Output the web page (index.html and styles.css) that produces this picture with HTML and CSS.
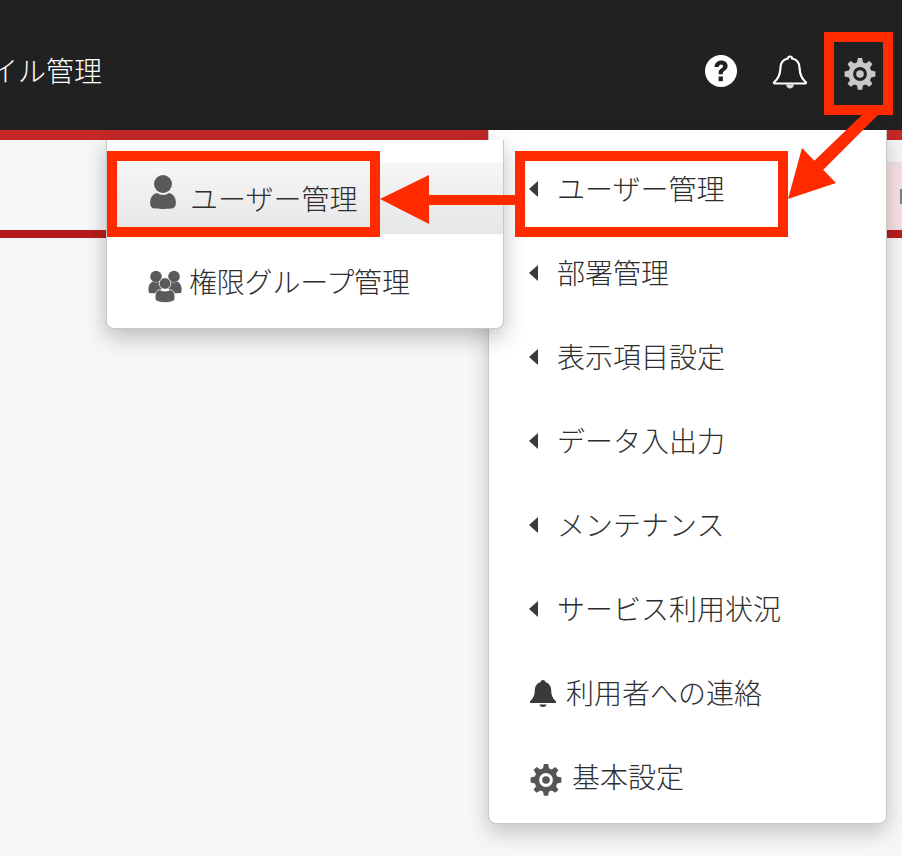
FILE: index.html
```html
<!DOCTYPE html>
<html lang="ja">
<head>
<meta charset="utf-8">
<title>ファイル管理</title>
<link rel="stylesheet" href="styles.css">
</head>
<body>
<svg width="0" height="0" class="defs">
  <defs>
    <path id="gear" fill-rule="evenodd" d="M14 1h4l.8 4 2.600 1.100 3.400-2.300 2.900 2.900-2.300 3.400 1.100 2.700 4 .8v4.800l-4 .8-1.100 2.600 2.300 3.400-2.900 2.900-3.400-2.300-2.600 1.100-.8 4h-4l-.8-4-2.600-1.100-3.400 2.300-2.900-2.900 2.300-3.400-1.100-2.600-4-.8v-4.800l4-.8 1.100-2.700-2.300-3.400 2.900-2.900 3.400 2.300L13.200 5zM16 9.500a6.500 6.500 0 1 0 0 13 6.500 6.500 0 0 0 0-13z"/>
    <circle id="gear-hub" cx="16" cy="16" r="3.600"/>
  </defs>
</svg>
<header class="topbar">
  <div class="title">ファイル管理</div>
  <div class="actions">
    <svg class="icon-help" viewBox="0 0 32 32"><circle cx="16" cy="16" r="16" fill="#fff"/><path d="M9.500 12c.2-4 3-6.500 6.800-6.500 3.800 0 6.300 2.300 6.300 5.500 0 4.300-4.700 4.600-4.700 7.200v1h-4.300v-1.500c0-4 4.500-4.300 4.500-6.400 0-1.100-.8-1.900-2-1.900-1.300 0-2.200 1-2.300 2.500z" fill="#212121"/><rect x="13.600" y="21.500" width="4.300" height="4.700" fill="#212121"/></svg>
    <svg class="icon-bell" viewBox="0 0 36 36"><path d="M18 2.500c1.300 0 2 .8 2.100 2 4.800 1 7.400 4.600 7.500 9.700.2 6.700 1.700 10 6.100 13.800.7.700.3 1.500-.6 1.500H2.900c-.9 0-1.300-.8-.6-1.500 4.400-3.800 5.900-7.100 6.100-13.800.1-5.100 2.700-8.700 7.500-9.700.1-1.200.8-2 2.100-2z" fill="none" stroke="#fff" stroke-width="2.200"/><path d="M14 30.500c.4 2.700 2 4 4 4s3.600-1.300 4-4z" fill="#ddd"/></svg>
    <svg class="icon-gear-top" viewBox="0 0 32 32"><use href="#gear"/><use href="#gear-hub"/></svg>
  </div>
</header>
<div class="accent"></div>
<section class="notice">
  <div class="notice-strip"><span class="notice-mark"></span></div>
</section>

<nav class="menu">
  <a class="menu-item"><span class="caret"></span><span class="label">ユーザー管理</span></a>
  <a class="menu-item"><span class="caret"></span><span class="label">部署管理</span></a>
  <a class="menu-item"><span class="caret"></span><span class="label">表示項目設定</span></a>
  <a class="menu-item"><span class="caret"></span><span class="label">データ入出力</span></a>
  <a class="menu-item"><span class="caret"></span><span class="label">メンテナンス</span></a>
  <a class="menu-item"><span class="caret"></span><span class="label">サービス利用状況</span></a>
  <a class="menu-item item-icon">
    <svg class="icon-bell-small" viewBox="0 0 28 28"><path d="M14 1c1.500 0 2.400 1 2.600 2.200 3.700 1 5.500 4 5.600 8 .1 5.200 1.500 8 4.800 11v1.800H1v-1.800c3.300-3 4.700-5.800 4.800-11 .1-4 1.900-7 5.600-8C11.600 2 12.500 1 14 1z"/><path d="M10.500 25.500c.4 1.800 1.800 2.500 3.500 2.500s3.100-.7 3.500-2.500z"/></svg>
    <span class="label">利用者への連絡</span>
  </a>
  <a class="menu-item item-icon">
    <svg class="icon-gear-small" viewBox="0 0 32 32"><use href="#gear"/><use href="#gear-hub"/></svg>
    <span class="label">基本設定</span>
  </a>
</nav>

<nav class="submenu">
  <a class="sub-item is-active">
    <svg class="icon-user" viewBox="0 0 26 34"><circle cx="13" cy="9" r="9"/><path d="M7 18c3.500 2.500 8.500 2.500 12 0 4 1 6.500 4 6.800 8.500.2 3.500-.5 5.500-2.300 6.500-3 1.200-18 1.200-21 0C.7 32 0 30 .2 26.500.5 22 3 19 7 18z"/></svg>
    <span>ユーザー管理</span>
  </a>
  <a class="sub-item item-group">
    <svg class="icon-group" viewBox="0 0 34 34"><circle cx="8" cy="6.500" r="5.800"/><circle cx="26" cy="6.500" r="5.800"/><path d="M1 23c-1.800-6 .5-10 4-11.500 2 1.200 4 1.200 6 0 2 .8 3.500 2 4 4l-4 8z"/><path d="M33 23c1.800-6-.5-10-4-11.500-2 1.200-4 1.200-6 0-2 .8-3.500 2-4 4l4 8z"/><circle cx="17" cy="13.500" r="5.800" stroke="#fff" stroke-width=".8"/><path d="M11.500 19.500c3.300 2 7.700 2 11 0 3.200 1 4.500 3.800 4.500 7.500 0 2-.5 3.200-1.500 3.800-3 2.400-14 2.400-17 0-1-.6-1.500-1.800-1.500-3.800 0-3.700 1.300-6.500 4.500-7.500z" stroke="#fff" stroke-width=".8"/></svg>
    <span>権限グループ管理</span>
  </a>
</nav>

<svg class="annotations" viewBox="0 0 902 856">
  <g fill="none" stroke="#ff2a00" stroke-width="10">
    <rect x="829" y="37" width="59" height="73"/>
    <rect x="520" y="156" width="263" height="76"/>
    <rect x="112" y="156" width="263" height="76"/>
  </g>
  <g fill="#ff2a00">
    <polygon points="863,114 879,114 823,170 813,162"/>
    <polygon points="788,199 802,148 836,183"/>
    <rect x="425" y="195" width="92" height="10"/>
    <polygon points="380,199 429,175 429,224"/>
  </g>
</svg>
</body>
</html>
```
FILE: styles.css
```css
* { box-sizing: border-box; }
html, body { margin: 0; height: 100%; }
body {
  position: relative;
  width: 902px;
  height: 856px;
  overflow: hidden;
  background: #f7f7f7;
  color: #2e2e2e;
  font-family: "Noto Sans CJK JP", "Noto Sans", sans-serif;
  font-size: 28px;
  font-weight: 300;
}
.defs { position: absolute; }
.topbar {
  height: 130px;
  padding-top: 12px;
  background: #212121;
  display: flex;
  align-items: center;
  justify-content: space-between;
}
.title {
  margin: -3px 0 0 -66px;
  color: #fff;
  line-height: 1;
  white-space: nowrap;
}
.actions {
  display: flex;
  align-items: center;
  padding-right: 25px;
  gap: 35px;
}
.icon-help { width: 32px; height: 32px; }
.icon-bell { width: 36px; height: 36px; margin-top: 2px; }
.icon-gear-top { width: 34px; height: 34px; fill: #c8c8c8; margin-top: 6px; filter: blur(.7px); }
.accent { height: 10px; background: #c62828; }
.notice {
  height: 98px;
  padding-top: 22px;
  border-bottom: 8px solid #b71c1c;
}
.notice-strip {
  height: 68px;
  margin-left: 886px;
  background: #f7e1e3;
  display: flex;
  align-items: center;
  justify-content: flex-end;
}
.notice-mark { width: 2px; height: 15px; background: #808080; }
.menu {
  position: absolute;
  left: 488px;
  top: 130px;
  width: 399px;
  height: 694px;
  padding-top: 17px;
  background: #fff;
  border: 1px solid #c8c8c8;
  border-top: 0;
  border-radius: 0 0 8px 8px;
  box-shadow: 0 8px 22px rgba(0, 0, 0, .22);
  display: flex;
  flex-direction: column;
}
.menu-item {
  height: 84px;
  flex: none;
  display: flex;
  align-items: center;
  padding-left: 40px;
  line-height: 1;
  white-space: nowrap;
}
.label { margin-top: -3px; }
.caret {
  width: 0;
  height: 0;
  margin-right: 19px;
  border-style: solid;
  border-width: 8px 9px 8px 0;
  border-color: transparent #3a3a3a transparent transparent;
}
.item-icon { gap: 9px; }
.icon-bell-small { width: 28px; height: 28px; fill: #3a3a3a; }
.icon-gear-small { width: 34px; height: 34px; fill: #555; margin-top: 6px; filter: blur(.6px); }
.submenu {
  position: absolute;
  left: 106px;
  top: 140px;
  width: 398px;
  height: 189px;
  padding: 22px 0 10px;
  background: #fff;
  border: 1px solid #c8c8c8;
  border-top: 0;
  border-radius: 0 0 8px 8px;
  box-shadow: 0 8px 22px rgba(0, 0, 0, .25);
  display: flex;
  flex-direction: column;
  gap: 12px;
}
.sub-item {
  height: 72px;
  flex: none;
  display: flex;
  align-items: center;
  padding-left: 43px;
  gap: 14px;
  line-height: 1;
  white-space: nowrap;
}
.is-active { background: linear-gradient(#f6f6f6, #e6e6e6); }
.item-group { padding-left: 41px; gap: 7px; }
.item-group span { margin-top: -2px; letter-spacing: -.2px; }
.icon-user { width: 26px; height: 34px; fill: #5a5a5a; margin-top: -12px; filter: blur(.6px); }
.icon-group { width: 34px; height: 34px; fill: #5a5a5a; margin-top: 10px; filter: blur(.7px); }
.annotations {
  position: absolute;
  left: 0;
  top: 0;
  width: 902px;
  height: 856px;
  pointer-events: none;
}
```
